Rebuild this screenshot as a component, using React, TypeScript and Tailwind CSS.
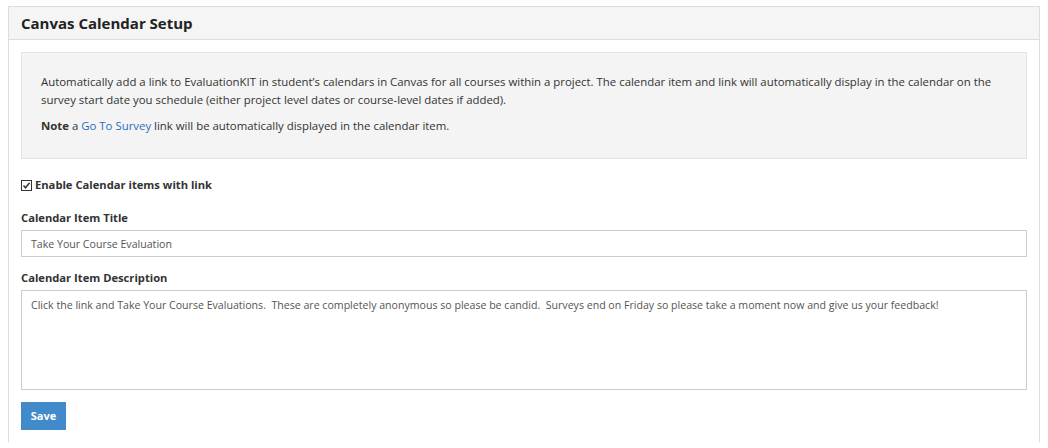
import React, { useState } from 'react';

const FONT = "font-['Open_Sans','Noto_Sans',sans-serif]";

function CheckIcon({ checked }: { checked: boolean }) {
  return (
    <svg width="11" height="11" viewBox="0 0 11 11" className="shrink-0">
      <rect x="0.5" y="0.5" width="10" height="10" fill="#fff" stroke="#333" />
      {checked && <path d="M2.5 5.5 L4.5 7.8 L8.6 2.8" fill="none" stroke="#333" strokeWidth="1.4" />}
    </svg>
  );
}

export default function App() {
  const [enabled, setEnabled] = useState(true);
  const [title, setTitle] = useState('Take Your Course Evaluation');
  const [desc, setDesc] = useState(
    'Click the link and Take Your Course Evaluations.  These are completely anonymous so please be candid.  Surveys end on Friday so please take a moment now and give us your feedback!'
  );

  return (
    <div className={`${FONT} bg-white w-[1048px] h-[448px] overflow-hidden pt-[6px] px-[8px] text-[#333]`}>
      <div className="border border-[#ddd] border-b-0 h-[436px] bg-white">
        {/* header */}
        <div className="h-[33px] bg-[#f5f5f5] border-b border-[#ddd] px-[12px] flex items-center">
          <h1 className="text-[15px] font-bold text-[#222] leading-none">Canvas Calendar Setup</h1>
        </div>

        <div className="px-[12px] pt-[12px]">
          {/* info box */}
          <div className="bg-[#f4f4f4] border border-[#e3e3e3] h-[107px] px-[19px] pt-[20px] text-[11.4px] leading-[18px]">
            <p>
              Automatically add a link to EvaluationKIT in student’s calendars in Canvas for all courses within a project. The calendar item and link will automatically display in the calendar on the
              <br />
              survey start date you schedule (either project level dates or course-level dates if added).
            </p>
            <p className="mt-[8px]">
              <b>Note</b> a <a href="#" className="text-[#2a6ebb]">Go To Survey</a> link will be automatically displayed in the calendar item.
            </p>
          </div>

          {/* enable */}
          <label className="flex items-center gap-[3px] mt-[18px] h-[16px] text-[11.2px] font-bold cursor-pointer" onClick={() => setEnabled(!enabled)}>
            <CheckIcon checked={enabled} />
            <span>Enable Calendar items with link</span>
          </label>

          {/* title */}
          <div className="mt-[17px] text-[11.2px] font-bold leading-[16px]">Calendar Item Title</div>
          <input
            type="text"
            value={title}
            onChange={(e) => setTitle(e.target.value)}
            className="mt-[4px] block w-full h-[27px] border border-[#ccc] px-[9px] text-[10.6px] text-[#555] outline-none"
          />

          {/* description */}
          <div className="mt-[13px] text-[11.2px] font-bold leading-[16px]">Calendar Item Description</div>
          <textarea
            value={desc}
            onChange={(e) => setDesc(e.target.value)}
            className="mt-[4px] block w-full h-[100px] border border-[#ccc] px-[9px] py-[6px] text-[10.6px] leading-[16px] text-[#555] outline-none resize-none"
          />

          <button className="mt-[12px] block w-[45px] h-[28px] bg-[#428bca] text-white text-[11px] font-bold">Save</button>
        </div>
      </div>
    </div>
  );
}
